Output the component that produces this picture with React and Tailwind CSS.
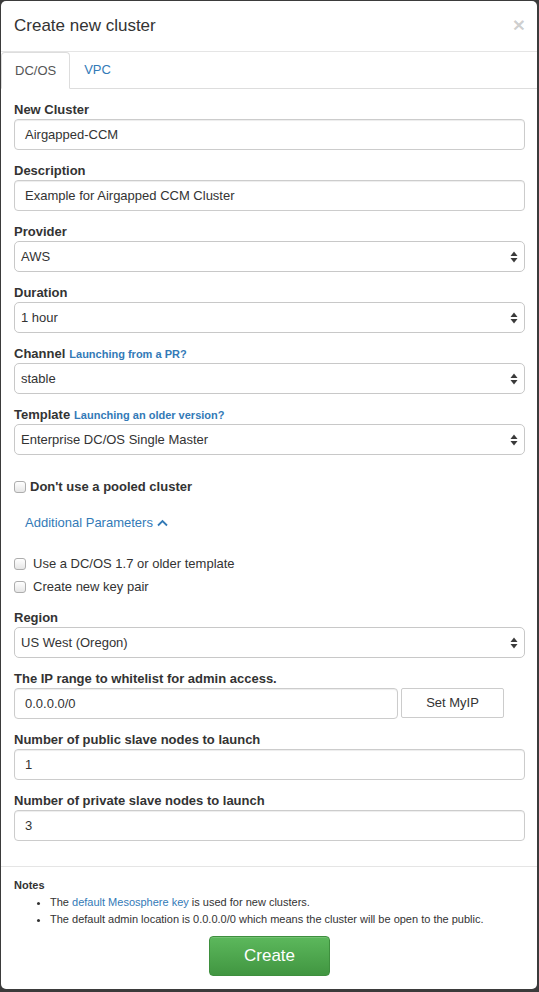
import React from 'react';

const font = { fontFamily: '"Liberation Sans", Arial, sans-serif' };

const Label = ({ children, link }) => (
  <div className="h-[18px] leading-[18px] text-[13px] font-bold text-[#333] whitespace-nowrap">
    {children}
    {link && <a className="ml-[4px] text-[11px] font-bold text-[#337ab7]">{link}</a>}
  </div>
);

const TextInput = ({ value, className = '' }) => (
  <div
    className={`h-[31px] flex items-center pl-[10px] border border-[#ccc] rounded-[4px] bg-white text-[13px] text-[#333] shadow-[inset_0_1px_1px_rgba(0,0,0,0.075)] ${className}`}
  >
    {value}
  </div>
);

const SelectArrows = () => (
  <svg width="8" height="12" viewBox="0 0 8 12" className="shrink-0">
    <path d="M4 0.5 L7.5 5 L0.5 5 Z" fill="#3a3a3a" />
    <path d="M4 11.5 L7.5 7 L0.5 7 Z" fill="#3a3a3a" />
  </svg>
);

const Select = ({ value }) => (
  <div className="h-[31px] flex items-center justify-between pl-[6px] pr-[6px] border border-[#c8c8c8] rounded-[5px] bg-white text-[13px] text-[#333]">
    <span>{value}</span>
    <SelectArrows />
  </div>
);

const Field = ({ label, link, children }) => (
  <div className="mb-[12px]">
    <Label link={link}>{label}</Label>
    {children}
  </div>
);

const Checkbox = ({ label, bold, className = '' }) => (
  <div className={`h-[20px] flex items-center text-[13px] text-[#333] ${className}`}>
    <span className="w-[12px] h-[12px] border border-[#adadad] rounded-[3px] bg-gradient-to-b from-white to-[#e6e6e6] shrink-0" />
    <span className={bold ? 'ml-[4px] font-bold' : 'ml-[7px]'}>{label}</span>
  </div>
);

export default function App() {
  return (
    <div className="h-screen overflow-hidden bg-[#3b3b3b] pt-px pl-px pr-[2px] pb-[2px]" style={font}>
      <div className="bg-white rounded-[5px] overflow-hidden">
        {/* header */}
        <div className="h-[51px] flex items-center justify-between pl-[13px] pr-[12px] border-b border-[#e5e5e5]">
          <h4 className="text-[17px] text-[#333]">Create new cluster</h4>
          <span className="text-[21px] font-bold leading-none text-black/20 -mt-[4px]">×</span>
        </div>

        {/* tabs */}
        <div className="flex h-[37px] border-b border-[#ddd] text-[13px]">
          <div className="h-[37px] px-[13px] flex items-center border border-[#ddd] border-b-white rounded-t-[4px] bg-white text-[#555] -mb-px">
            DC/OS
          </div>
          <div className="h-[36px] ml-[2px] px-[12px] flex items-center text-[#337ab7]">VPC</div>
        </div>

        {/* body */}
        <div className="pt-[12px] pb-[13px] pl-[13px] pr-[12px]">
          <Field label="New Cluster">
            <TextInput value="Airgapped-CCM" />
          </Field>
          <Field label="Description">
            <TextInput value="Example for Airgapped CCM Cluster" />
          </Field>
          <Field label="Provider">
            <Select value="AWS" />
          </Field>
          <Field label="Duration">
            <Select value="1 hour" />
          </Field>
          <Field label="Channel" link="Launching from a PR?">
            <Select value="stable" />
          </Field>
          <div className="mb-[22px]">
            <Label link="Launching an older version?">Template</Label>
            <Select value="Enterprise DC/OS Single Master" />
          </div>

          <Checkbox label="Don't use a pooled cluster" bold />

          <div className="mt-[16px] h-[20px] flex items-center pl-[11px] text-[13px] text-[#337ab7]">
            Additional Parameters
            <svg width="11" height="8" viewBox="0 0 11 8" className="ml-[4px]">
              <path d="M1 6.5 L5.5 2 L10 6.5" fill="none" stroke="#337ab7" strokeWidth="1.8" />
            </svg>
          </div>

          <Checkbox label="Use a DC/OS 1.7 or older template" className="mt-[21px]" />
          <Checkbox label="Create new key pair" className="mt-[3px]" />

          <div className="mt-[12px]">
            <Field label="Region">
              <Select value="US West (Oregon)" />
            </Field>
          </div>

          <Field label="The IP range to whitelist for admin access.">
            <div className="flex items-start">
              <TextInput value="0.0.0.0/0" className="w-[384px]" />
              <div className="ml-[3px] w-[103px] h-[30px] flex items-center justify-center border border-[#ccc] rounded-[2px] bg-white text-[13px] text-[#333]">
                Set MyIP
              </div>
            </div>
          </Field>
          <Field label="Number of public slave nodes to launch">
            <TextInput value="1" />
          </Field>
          <div>
            <Label>Number of private slave nodes to launch</Label>
            <TextInput value="3" />
          </div>
          <div className="h-[12px]" />
        </div>

        {/* footer */}
        <div className="border-t border-[#e5e5e5] pt-[10px] pb-[13px] pl-[13px] pr-[12px]">
          <div className="text-[11px] leading-[17px] font-bold text-[#333]">Notes</div>
          <ul className="text-[11px] leading-[17px] text-[#333] list-disc pl-[36px]">
            <li>
              The <a className="text-[#337ab7]">default Mesosphere key</a> is used for new clusters.
            </li>
            <li>The default admin location is 0.0.0.0/0 which means the cluster will be open to the public.</li>
          </ul>
          <div className="mt-[8px] flex justify-center">
            <button className="w-[121px] h-[40px] rounded-[4px] border border-[#3e8f3e] bg-gradient-to-b from-[#5cb85c] to-[#419641] text-white text-[17px] shadow-[inset_0_1px_0_rgba(255,255,255,0.15)]">
              Create
            </button>
          </div>
        </div>
      </div>
    </div>
  );
}
